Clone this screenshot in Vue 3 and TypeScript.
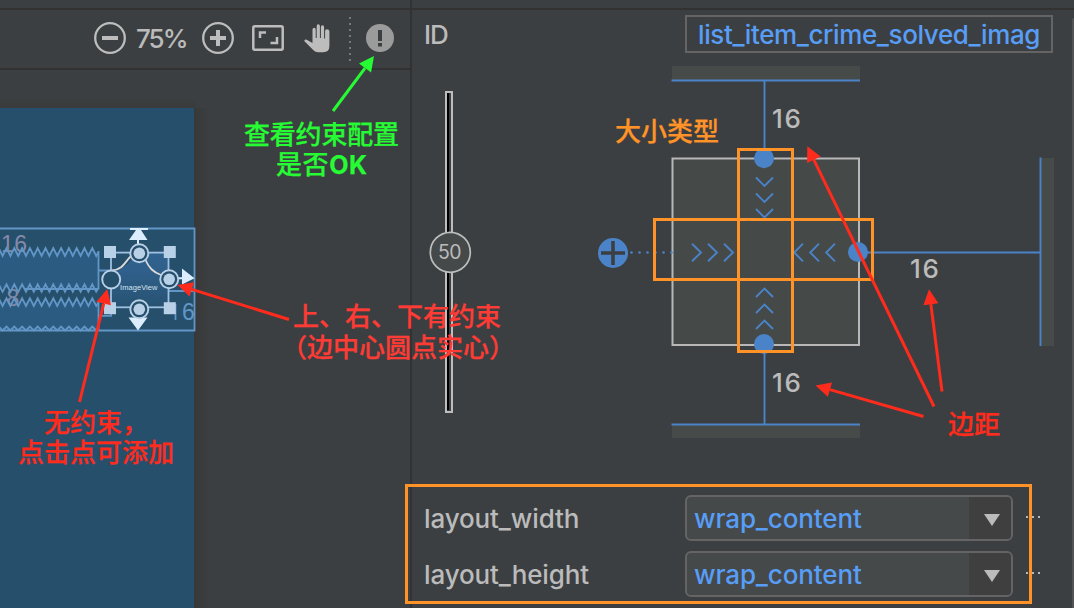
<script setup lang="ts">
interface Attribute { name: string; value: string }

const attributes: Attribute[] = [
  { name: 'layout_width', value: 'wrap_content' },
  { name: 'layout_height', value: 'wrap_content' },
]

/* Zigzag edge of a text view whose width is compressed */
function spring(top: number, bottom: number): string {
  const points: string[] = []
  for (let i = 0; i < 26; i++) {
    const x = 92.3 - (24 - i) * 3.9
    points.push(`${x.toFixed(1)},${i % 2 === 0 ? top : bottom}`)
  }
  points.push(`98.6,${(top + bottom) / 2}`)
  return points.join(' ')
}

/* Arrow made of a shaft and a triangular head whose tip is at x2,y2 */
function arrow(x1: number, y1: number, x2: number, y2: number, color: string) {
  const length = Math.hypot(x2 - x1, y2 - y1)
  const ux = (x2 - x1) / length
  const uy = (y2 - y1) / length
  const bx = x2 - ux * 15
  const by = y2 - uy * 15
  return {
    x1, y1, x2: bx, y2: by, color,
    head: `${x2},${y2} ${bx - uy * 7.5},${by + ux * 7.5} ${bx + uy * 7.5},${by - ux * 7.5}`,
  }
}

const red = '#ff2b1c'
const arrows = [
  arrow(333, 111, 374, 56, '#26fc33'),
  arrow(289, 319.5, 177.5, 285, red),
  arrow(79.5, 402, 107.3, 289, red),
  arrow(934, 406.5, 807.3, 146.3, red),
  arrow(942, 391.5, 929, 289.3, red),
  arrow(923.5, 416.5, 815.5, 385.5, red),
]

const downChevrons = [178, 194, 209.5]
const upChevrons = [297, 313, 329]
const rightChevrons = [692, 708, 724]
const leftChevrons = [803, 819, 835]
const dots = [631.5, 639.5, 647.5, 655.5, 663.5, 671.5]
</script>

<template>
  <div class="window">
    <section class="designer">
      <div class="strip"></div>
      <div class="toolbar">
        <svg class="round" viewBox="0 0 32 32"><circle cx="16" cy="16" r="14.8" /><path d="M8 16h16" /></svg>
        <span class="percent">75%</span>
        <svg class="round plus" viewBox="0 0 32 32"><circle cx="16" cy="16" r="14.8" /><path d="M8 16h16M16 8v16" /></svg>
        <svg class="screen" viewBox="0 0 32 26"><rect x="1.3" y="1.3" width="29.4" height="23.4" rx="1.5" /><path d="M8 13V7.500h6M18.500 18H25v-6" /></svg>
        <svg class="hand" viewBox="0 0 27 29"><path d="M8.500 19V5.500q0-1.800 1.600-1.800t1.600 1.800V14h1V2q0-1.700 1.600-1.700T15.900 2v12h1V3q0-1.700 1.600-1.700T20.100 3v11.500h1V7q0-1.700 1.900-1.700T25.400 7v15q0 6.200-6.200 6.200h-5q-3 0-5-2.200L.7 17.500q-.8-1 .3-1.700 1-.5 2.200.1z" /></svg>
        <svg class="divider" viewBox="0 0 2 46"><path d="M1 1v44" /></svg>
        <svg class="alert" viewBox="0 0 28 28"><circle cx="14" cy="14" r="14" /><path d="M14 6v11M14 19v3.500" /></svg>
      </div>
      <svg class="canvas" viewBox="0 70 410 538">
        <defs>
          <linearGradient id="side"><stop offset="0" stop-color="#373839" /><stop offset="1" stop-color="#3c3f41" /></linearGradient>
          <linearGradient id="above" x2="0" y2="1"><stop offset="0" stop-color="#3c3f41" /><stop offset="1" stop-color="#393b3c" /></linearGradient>
          <linearGradient id="image" x2="0" y2="1"><stop offset="0" stop-color="#31628f" /><stop offset=".35" stop-color="#2f5f8a" /><stop offset="1" stop-color="#275272" /></linearGradient>
        </defs>
        <rect y="98" width="196" height="10" fill="url(#above)" />
        <rect x="194" y="108" width="16" height="500" fill="url(#side)" />
        <rect y="108" width="194" height="500" fill="#264f6c" />
        <rect y="252" width="98.500" height="36" fill="#2b5b80" />
        <rect y="302" width="98.500" height="28" fill="#2b5b80" />
        <g class="ghost"><text x="1" y="252" textLength="26">16</text><text x="6.500" y="306">8</text></g>
        <g class="wire">
          <path d="M0 228.500H194.500V330.500H0M98.500 251v38M98.500 302v28M98 270.500h13M98 315.800h13v-9M24 289h74M168 291h27M175.500 304v16" />
          <polyline :points="spring(248, 256)" />
          <polyline :points="spring(284.300, 291.800)" />
          <polyline :points="spring(298.300, 306)" />
          <polyline :points="spring(326.500, 330.500)" />
        </g>
        <text class="margin-six" x="182" y="319.500">6</text>
        <path d="M112 270.500Q124 270 132 259L139 252.500H168V307H112z" fill="url(#image)" />
        <rect x="111" y="252.600" width="57.500" height="54.700" class="frame" />
        <path d="M112 270.300C124 270 126 259 132 255.500M145 259C149 268 153 272 161 275" class="curve" />
        <g fill="#b9d1e7">
          <rect x="104" y="246" width="12" height="12" /><rect x="163.800" y="246" width="12" height="12" />
          <rect x="104" y="302.200" width="12" height="12" /><rect x="163.800" y="302.200" width="12" height="12" />
        </g>
        <path d="M130 228h18v2h-7l6.500 10H129l7-10h-6zM137 239h2v6h-2zM182 268.500l12.500 9.800L182 284.500zM177 277.300h6v2h-6zM128.500 317.500h19L138 330.500z" fill="#dcedfe" />
        <g class="handle">
          <circle cx="139.300" cy="253.300" r="9" /><circle cx="169.200" cy="279.300" r="9" />
          <circle cx="139.300" cy="309.300" r="9" /><circle cx="111.200" cy="279.500" r="9" />
        </g>
        <g fill="#b9d1e7">
          <circle cx="139.300" cy="253.300" r="5.800" /><circle cx="169.200" cy="279.300" r="5.800" /><circle cx="139.300" cy="309.300" r="5.800" />
        </g>
        <text class="widget" x="120" y="289.500" textLength="37.500">ImageView</text>
      </svg>
    </section>

    <section class="properties">
      <div class="strip"></div>
      <div class="id-row">
        <label>ID</label>
        <div class="id-field"><span>list_item_crime_solved_image</span></div>
      </div>
      <svg class="inspector" viewBox="412 58 662 437">
        <g fill="#464a49">
          <rect x="672" y="66" width="188" height="14" /><rect x="672" y="425" width="188" height="13" />
          <rect x="1041" y="158" width="13" height="188" />
        </g>
        <rect x="672.500" y="158.500" width="186.500" height="186.500" class="view-box" />
        <g class="blue">
          <path d="M671.500 80.500H860M764.500 80V158M671.500 424.500H860M764.500 344V424M858 252.500H1041M1040.500 157.500V346" />
          <path v-for="y in downChevrons" :key="'d' + y" :d="`M756 ${y - 0.5}l8.500 8.500 8.500-8.500`" />
          <path v-for="y in upChevrons" :key="'u' + y" :d="`M756 ${y}l8.500-8.500 8.500 8.500`" />
          <path v-for="x in rightChevrons" :key="'r' + x" :d="`M${x} 243.700l9 8.800-9 8.800`" />
          <path v-for="x in leftChevrons" :key="'l' + x" :d="`M${x} 243.700l-8.800 8.800 8.800 8.800`" />
        </g>
        <g fill="#4b83c9">
          <circle cx="764" cy="158.300" r="10" /><circle cx="858" cy="252" r="10" /><circle cx="764" cy="344" r="10" />
          <circle cx="613" cy="253" r="15" />
          <circle v-for="x in dots" :key="x" :cx="x" cy="252.500" r="1.300" />
        </g>
        <path d="M601 253h24M613 241v24" stroke="#3c3f41" stroke-width="3.600" />
        <g class="value">
          <text x="772" y="128" textLength="29">16</text>
          <text x="910" y="278" textLength="29">16</text>
          <text x="772" y="392" textLength="29">16</text>
        </g>
        <rect x="446" y="92" width="6" height="320" fill="#3c3f41" stroke="#bdbdbd" stroke-width="2" />
        <rect x="447" y="93" width="2" height="317" fill="#000" />
        <circle cx="450.300" cy="252.300" r="20" fill="#454949" stroke="#bdbdbd" stroke-width="1.700" />
        <text class="bias" x="438" y="258.500" textLength="23.500">50</text>
      </svg>
      <div class="attributes">
        <div v-for="item in attributes" :key="item.name" class="attribute">
          <label>{{ item.name }}</label>
          <div class="combo">
            <span>{{ item.value }}</span>
            <div class="drop"><svg viewBox="0 0 16 12"><path d="M0 0h16L8 12z" /></svg></div>
          </div>
          <svg class="more" viewBox="0 0 14 2"><path d="M0 0h2v2H0zM6 0h2v2H6zM12 0h2v2h-2z" /></svg>
        </div>
      </div>
      <div class="scrollbar"></div>
    </section>

    <svg class="notes" viewBox="0 0 1074 608">
      <g class="highlight">
        <rect x="738.500" y="149.500" width="54" height="202" />
        <rect x="654.500" y="219.500" width="218" height="60" />
        <rect x="406.500" y="485.500" width="624" height="117" />
      </g>
      <g v-for="(a, i) in arrows" :key="i">
        <line :x1="a.x1" :y1="a.y1" :x2="a.x2" :y2="a.y2" :stroke="a.color" stroke-width="3" />
        <polygon :points="a.head" :fill="a.color" />
      </g>
      <g class="green"><text x="244" y="143.500" textLength="155">查看约束配置</text><text x="276" y="174" textLength="91">是否<tspan class="latin">OK</tspan></text></g>
      <text class="orange" x="615" y="141" textLength="104">大小类型</text>
      <g class="coral"><text x="293" y="326" textLength="208">上、右、下有约束</text><text x="281" y="356.500" textLength="234">（边中心圆点实心）</text></g>
      <g class="red"><text x="44" y="431.500" textLength="104">无约束，</text><text x="18" y="462" textLength="156">点击点可添加</text><text x="948" y="434" textLength="52">边距</text></g>
    </svg>
  </div>
</template>

<style>
body { margin: 0; background: #3c3f41; }
</style>

<style scoped>
.window {
  position: relative; display: flex; width: 1074px; height: 608px; overflow: hidden;
  background: #3c3f41; color: #bbb; font: 500 26px/1 Inter, "Liberation Sans", sans-serif;
}
svg { display: block; flex: none; }
.designer { width: 410px; border-right: 2px solid #323232; }
.properties { position: relative; width: 662px; }
.strip { height: 8px; border-bottom: 2px solid #323232; }
.toolbar { box-sizing: border-box; display: flex; align-items: center; height: 60px; padding: 0 0 2px 94px; border-bottom: 2px solid #323232; }
.round { width: 32px; height: 32px; fill: none; stroke: #bdbdbd; stroke-width: 2.3; }
.round path { stroke-width: 4; }
.percent { width: 66px; margin: 2px -10px 0 10px; letter-spacing: -2px; }
.plus { margin-left: 10px; }
.screen { width: 32px; height: 26px; margin: -1px 0 0 18px; fill: none; stroke: #bdbdbd; stroke-width: 2.500; }
.hand { width: 27px; height: 29px; margin-left: 20px; fill: #bdbdbd; }
.divider { width: 2px; height: 46px; margin: 2px 0 0 18px; stroke: #77797a; stroke-width: 2; stroke-dasharray: 2 4; }
.alert { width: 28px; height: 28px; margin-left: 15px; fill: #9b9b9b; stroke: none; }
.alert path { stroke: #3c3f41; stroke-width: 4; }
.canvas { width: 410px; height: 538px; }
.canvas text { font-family: "Liberation Sans", Arial, sans-serif; font-weight: 400; }
.ghost { fill: #8589a9; font-size: 23px; }
.wire { fill: none; stroke: #6296c6; stroke-width: 1.800; }
.margin-six { fill: #6296c6; font-size: 23px; }
.frame { fill: none; stroke: #9fc0e0; stroke-width: 1.800; }
.curve { fill: none; stroke: #ddd9d8; stroke-width: 1.800; }
.handle { fill: #264f6c; stroke: #b9d1e7; stroke-width: 1.900; }
.widget { fill: #d5e2ed; font-size: 7.500px; }
.id-row { box-sizing: border-box; display: flex; align-items: flex-start; height: 48px; padding: 5px 0 0 12px; }
.id-row label { width: 261px; padding-top: 7px; letter-spacing: -1px; }
.id-field { box-sizing: border-box; width: 368px; height: 38px; padding: 0 11px; border: 2px solid #646464; }
.id-field span { display: block; height: 34px; line-height: 35px; overflow: hidden; white-space: nowrap; color: #589df6; letter-spacing: -.38px; }
.inspector { width: 662px; height: 437px; }
.view-box { fill: #454948; stroke: #b8b8b8; stroke-width: 2; }
.blue { fill: none; stroke: #4b83c9; stroke-width: 1.900; }
.value { fill: #bbb; font-size: 26px; }
.bias { fill: #bbb; font-size: 19.500px; font-weight: 400; }
.attributes { display: flex; flex-direction: column; gap: 10px; padding: 0 0 0 12px; }
.attribute { display: flex; height: 46px; }
.attribute label { width: 261px; padding-top: 11px; letter-spacing: -.12px; }
.combo { box-sizing: border-box; display: flex; width: 328px; height: 46px; border: 2px solid #646464; border-radius: 6px; background: #454949; overflow: hidden; color: #589df6; }
.combo span { flex: 1; padding: 9px 0 0 7px; letter-spacing: -.12px; }
.drop { width: 42px; background: #3f3f40; }
.drop svg { width: 16px; height: 12px; margin: 17px 0 0 15px; fill: #bbb; }
.more { width: 14px; height: 2px; margin: 21px 0 0 13px; fill: #bbb; }
.scrollbar { position: absolute; top: 18px; right: 0; bottom: 0; width: 2px; background: #515354; border-radius: 2px 0 0; }
.notes { position: absolute; inset: 0; width: 1074px; height: 608px; font: 500 26px "Noto Sans CJK SC", sans-serif; }
.notes text { stroke-width: .25; }
.highlight { fill: none; stroke: #ff9328; stroke-width: 3; }
.green { fill: #26fc33; stroke: #26fc33; }
.orange { fill: #ff9328; stroke: #ff9328; }
.coral { fill: #ff3b35; stroke: #ff3b35; }
.red { fill: #ff2b1c; stroke: #ff2b1c; }
.latin { font-family: Inter, sans-serif; font-weight: 700; font-size: 25px; }
</style>
